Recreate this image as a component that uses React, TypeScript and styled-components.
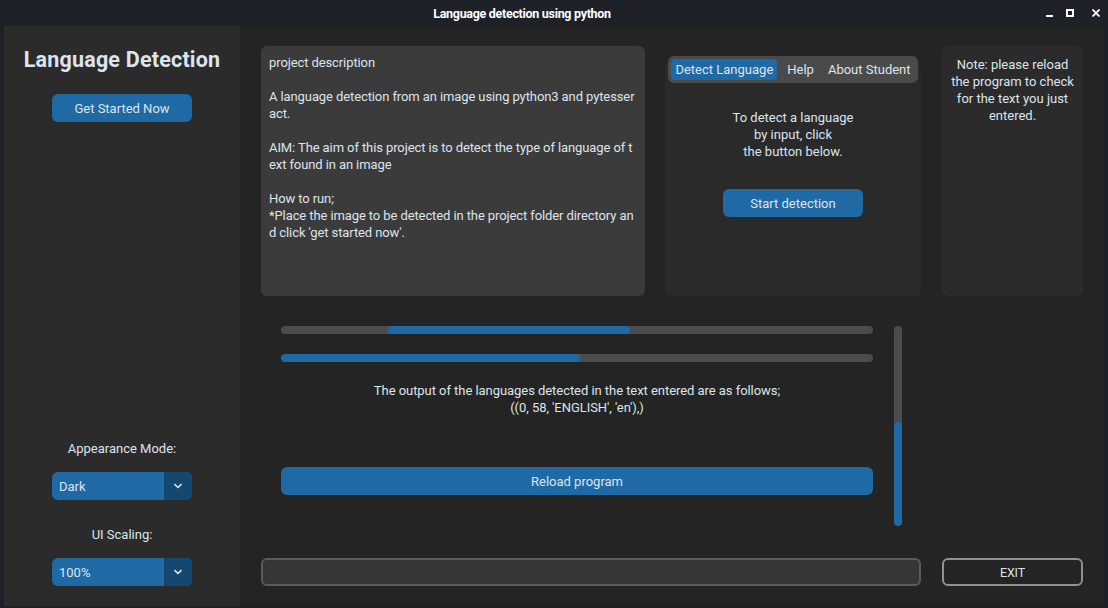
import React from "react";
import styled, { createGlobalStyle } from "styled-components";

const Global = createGlobalStyle`
  html, body { margin: 0; padding: 0; background: #1f2128; }
  body { font-family: Roboto, "Noto Sans", sans-serif; color: #dce4ee; }
  * { box-sizing: border-box; }
`;

const Window = styled.div`
  width: 1108px;
  height: 608px;
  background: #1f2128;
  display: flex;
  flex-direction: column;
  overflow: hidden;
`;

const TitleBar = styled.div`
  height: 26px;
  display: flex;
  align-items: center;
  justify-content: center;
  padding-right: 64px;
  position: relative;
  font-family: Roboto, sans-serif;
  font-weight: 700;
  font-size: 12.5px;
  letter-spacing: -0.3px;
  color: #ffffff;
`;

const WinControls = styled.div`
  position: absolute;
  right: 8px;
  top: 0;
  height: 26px;
  display: flex;
  align-items: center;
`;

const WinIcon = styled.svg<{ $ml?: number }>`
  margin-left: ${(p) => p.$ml ?? 0}px;
  display: block;
`;

const Body = styled.div`
  flex: 1;
  margin: 0 4px 2px 4px;
  background: #242424;
  display: grid;
  grid-template-columns: 236px 1fr;
`;

const Sidebar = styled.div`
  background: #2b2b2b;
  display: flex;
  flex-direction: column;
  align-items: center;
  padding: 20px 0 20px 0;
`;

const Logo = styled.div`
  font-size: 21.5px;
  font-weight: 700;
  line-height: 28px;
  letter-spacing: 0.2px;
  color: #dce4ee;
`;

const Button = styled.button<{ $w?: number; $h?: number; $mt?: number }>`
  width: ${(p) => (p.$w ? `${p.$w}px` : "100%")};
  height: ${(p) => p.$h ?? 28}px;
  margin-top: ${(p) => p.$mt ?? 0}px;
  background: #1f6aa5;
  border: none;
  border-radius: 6px;
  color: #dce4ee;
  font-family: Roboto, sans-serif;
  font-size: 13px;
  padding: 0;
  display: flex;
  align-items: center;
  justify-content: center;
  flex-shrink: 0;
`;

const Spacer = styled.div`
  flex: 1;
`;

const SideLabel = styled.div<{ $mt?: number }>`
  font-size: 13px;
  line-height: 17px;
  margin-top: ${(p) => p.$mt ?? 0}px;
  color: #dce4ee;
`;

const OptionMenu = styled.div`
  width: 140px;
  height: 28px;
  margin-top: 15px;
  border-radius: 6px;
  overflow: hidden;
  display: flex;
  background: #1f6aa5;
`;

const OptionValue = styled.div`
  flex: 1;
  display: flex;
  align-items: center;
  padding-left: 7px;
  font-size: 13px;
  color: #dce4ee;
`;

const OptionArrow = styled.div`
  width: 28px;
  background: #144870;
  display: flex;
  align-items: center;
  justify-content: center;
`;

const Main = styled.div`
  display: grid;
  grid-template-columns: 384px 256px 142px;
  grid-template-rows: 250px 222px 28px;
  column-gap: 20px;
  row-gap: 20px;
  padding: 20px 0 0 21px;
`;

const TextPanel = styled.div`
  background: #3b3b3b;
  border-radius: 6px;
  padding: 8px 8px;
  font-size: 13px;
  line-height: 17px;
  letter-spacing: -0.1px;
  color: #dce4ee;
  white-space: pre;
`;

const TabView = styled.div`
  display: flex;
  flex-direction: column;
`;

const Segmented = styled.div`
  align-self: center;
  margin-top: 10px;
  height: 27px;
  background: #4a4a4a;
  border-radius: 6px;
  padding: 3px;
  display: flex;
  position: relative;
  z-index: 1;
`;

const Tab = styled.div<{ $active?: boolean; $ml?: number; $pr?: number }>`
  height: 21px;
  padding: 0 ${(p) => p.$pr ?? (p.$active ? 4 : 7)}px 0 ${(p) => (p.$active ? 4 : 7)}px;
  margin-left: ${(p) => p.$ml ?? 0}px;
  border-radius: 4px;
  background: ${(p) => (p.$active ? "#1f6aa5" : "transparent")};
  display: flex;
  align-items: center;
  font-size: 13px;
  color: #dce4ee;
  white-space: nowrap;
`;

const TabFrame = styled.div`
  flex: 1;
  margin-top: -20px;
  background: #2a2a2a;
  border-radius: 6px;
  display: flex;
  flex-direction: column;
  align-items: center;
  padding-top: 46px;
`;

const CenterText = styled.div`
  font-size: 13px;
  line-height: 17px;
  text-align: center;
  white-space: pre;
  color: #dce4ee;
`;

const NotePanel = styled.div`
  background: #2b2b2b;
  border-radius: 6px;
  padding-top: 10px;
  margin-left: 1px;
  display: flex;
  justify-content: center;
`;

const ScrollArea = styled.div`
  grid-column: 1 / 3;
  display: flex;
  padding: 10px 0 12px 20px;
`;

const ScrollContent = styled.div`
  width: 592px;
  display: flex;
  flex-direction: column;
  align-items: center;
`;

const Track = styled.div<{ $mt?: number }>`
  width: 100%;
  height: 8px;
  margin-top: ${(p) => p.$mt ?? 0}px;
  border-radius: 4px;
  background: #4a4d50;
  position: relative;
  overflow: hidden;
`;

const Fill = styled.div<{ $left: number; $width: number }>`
  position: absolute;
  top: 0;
  bottom: 0;
  left: ${(p) => p.$left}px;
  width: ${(p) => p.$width}px;
  border-radius: 4px;
  background: #1f6aa5;
`;

const OutputText = styled(CenterText)`
  margin-top: 20px;
  font-size: 13px;
  letter-spacing: -0.05px;
`;

const Scrollbar = styled.div`
  width: 8px;
  margin-left: 21px;
  border-radius: 4px;
  background: #4a4d50;
  display: flex;
  flex-direction: column;
  justify-content: flex-end;
  overflow: hidden;
`;

const Thumb = styled.div<{ $h: number }>`
  height: ${(p) => p.$h}px;
  border-radius: 4px;
  background: #1f6aa5;
`;

const Entry = styled.div`
  grid-column: 1 / 3;
  height: 28px;
  width: 660px;
  background: #343638;
  border: 2px solid #565b5e;
  border-radius: 6px;
`;

const ExitButton = styled.div`
  width: 141px;
  height: 28px;
  margin-left: 1px;
  border: 2px solid #8d9296;
  border-radius: 6px;
  display: flex;
  align-items: center;
  justify-content: center;
  font-size: 12.5px;
  color: #dce4ee;
  letter-spacing: -0.2px;
`;

const Chevron = () => (
  <svg width="10" height="6" viewBox="0 0 10 6">
    <path d="M1.5 1.2 L5 4.5 L8.5 1.2" stroke="#dce4ee" strokeWidth="1.6" fill="none" />
  </svg>
);

const description = `project description

A language detection from an image using python3 and pytesser
act.

AIM: The aim of this project is to detect the type of language of t
ext found in an image

How to run;
*Place the image to be detected in the project folder directory an
d click 'get started now'.`;

export default function App() {
  return (
    <Window>
      <Global />
      <TitleBar>
        Language detection using python
        <WinControls>
          <WinIcon width="7" height="8" viewBox="0 0 7 8">
            <rect x="0" y="6" width="7" height="2" fill="#fff" />
          </WinIcon>
          <WinIcon $ml={13} width="8" height="8" viewBox="0 0 8 8">
            <rect x="1" y="1" width="6" height="6" stroke="#fff" strokeWidth="2" fill="none" />
          </WinIcon>
          <WinIcon $ml={18} width="8" height="8" viewBox="0 0 8 8">
            <path d="M0.5 0.5 L7.5 7.5 M7.5 0.5 L0.5 7.5" stroke="#fff" strokeWidth="1.8" />
          </WinIcon>
        </WinControls>
      </TitleBar>
      <Body>
        <Sidebar>
          <Logo>Language Detection</Logo>
          <Button $w={140} $mt={20}>Get Started Now</Button>
          <Spacer />
          <SideLabel>Appearance Mode:</SideLabel>
          <OptionMenu>
            <OptionValue>Dark</OptionValue>
            <OptionArrow><Chevron /></OptionArrow>
          </OptionMenu>
          <SideLabel $mt={26}>UI Scaling:</SideLabel>
          <OptionMenu>
            <OptionValue>100%</OptionValue>
            <OptionArrow><Chevron /></OptionArrow>
          </OptionMenu>
        </Sidebar>
        <Main>
          <TextPanel>{description}</TextPanel>
          <TabView>
            <Segmented>
              <Tab $active>Detect Language</Tab>
              <Tab $ml={3}>Help</Tab>
              <Tab $pr={4}>About Student</Tab>
            </Segmented>
            <TabFrame>
              <CenterText>{"To detect a language\nby input, click\nthe button below."}</CenterText>
              <Button $w={140} $mt={29}>Start detection</Button>
            </TabFrame>
          </TabView>
          <NotePanel>
            <CenterText>{"Note: please reload\nthe program to check\nfor the text you just\nentered."}</CenterText>
          </NotePanel>
          <ScrollArea>
            <ScrollContent>
              <Track>
                <Fill $left={107} $width={242} />
              </Track>
              <Track $mt={20}>
                <Fill $left={0} $width={299} />
              </Track>
              <OutputText>
                {"The output of the languages detected in the text entered are as follows;\n((0, 58, 'ENGLISH', 'en'),)"}
              </OutputText>
              <Button $h={28} $mt={51}>Reload program</Button>
            </ScrollContent>
            <Scrollbar>
              <Thumb $h={104} />
            </Scrollbar>
          </ScrollArea>
          <Entry />
          <ExitButton>EXIT</ExitButton>
        </Main>
      </Body>
    </Window>
  );
}
